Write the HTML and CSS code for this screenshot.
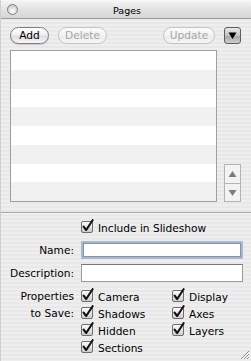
FILE: index.html
```html
<!DOCTYPE html>
<html>
<head>
<meta charset="utf-8">
<link rel="stylesheet" href="styles.css">
</head>
<body>
<svg class="defs" width="0" height="0">
  <defs>
    <linearGradient id="cbg" x1="0" y1="0" x2="0" y2="1">
      <stop offset="0" stop-color="#ffffff"/>
      <stop offset="0.5" stop-color="#e6e6e6"/>
      <stop offset="1" stop-color="#c9c9c9"/>
    </linearGradient>
    <symbol id="check" viewBox="0 0 14 14">
      <rect x="0.5" y="2.5" width="11" height="11" rx="1.5" fill="url(#cbg)" stroke="#6e6e6e"/>
      <path d="M2.6 7.6 L5.2 11 L11.6 1.2" fill="none" stroke="#111" stroke-width="2.1" stroke-linecap="round" stroke-linejoin="round"/>
    </symbol>
  </defs>
</svg>
<div class="window">
  <div class="titlebar">
    <span class="close"></span>
    <span class="title">Pages</span>
  </div>
  <div class="top">
    <div class="toolbar">
      <button class="btn btn-add">Add</button>
      <button class="btn btn-delete disabled">Delete</button>
      <span class="spacer"></span>
      <button class="btn btn-update disabled">Update</button>
      <span class="menu">
        <svg width="15" height="15" viewBox="0 0 15 15"><path d="M3.5 4.5 H11.5 L7.5 11 Z" fill="#000"/></svg>
      </span>
    </div>
    <div class="listarea">
      <div class="list">
        <div class="row"></div>
        <div class="row alt"></div>
        <div class="row"></div>
        <div class="row alt"></div>
        <div class="row"></div>
        <div class="row alt"></div>
        <div class="row"></div>
        <div class="row alt"></div>
      </div>
      <div class="scroll">
        <div class="arrow up"><svg width="15" height="18" viewBox="0 0 15 18"><path d="M3.5 12 H11.5 L7.5 6 Z" fill="#7d7d7d"/></svg></div>
        <div class="arrow down"><svg width="15" height="18" viewBox="0 0 15 18"><path d="M3.5 6 H11.5 L7.5 12 Z" fill="#7d7d7d"/></svg></div>
      </div>
    </div>
  </div>
  <div class="sep"></div>
  <div class="form">
    <div class="frow include">
      <span class="label"></span>
      <label class="cb"><svg class="box"><use href="#check"/></svg>Include in Slideshow</label>
    </div>
    <div class="frow name">
      <span class="label">Name:</span>
      <span class="field focus"></span>
    </div>
    <div class="frow desc">
      <span class="label">Description:</span>
      <span class="field"></span>
    </div>
    <div class="frow props">
      <span class="label">Properties<br>to Save:</span>
      <div class="checks">
        <label class="cb"><svg class="box"><use href="#check"/></svg>Camera</label>
        <label class="cb"><svg class="box"><use href="#check"/></svg>Shadows</label>
        <label class="cb"><svg class="box"><use href="#check"/></svg>Hidden</label>
        <label class="cb"><svg class="box"><use href="#check"/></svg>Sections</label>
        <label class="cb"><svg class="box"><use href="#check"/></svg>Display</label>
        <label class="cb"><svg class="box"><use href="#check"/></svg>Axes</label>
        <label class="cb"><svg class="box"><use href="#check"/></svg>Layers</label>
      </div>
    </div>
  </div>
  <svg class="grip" width="11" height="11" viewBox="0 0 11 11">
    <path d="M10 2 L2 10 M10 5 L5 10 M10 8 L8 10" stroke="#8a8a8a" stroke-width="1"/>
    <path d="M10.5 3 L3 10.5 M10.5 6 L6 10.5 M10.5 9 L9 10.5" stroke="#ffffff" stroke-width="1"/>
  </svg>
</div>
</body>
</html>
```

FILE: styles.css
```css
* { box-sizing: border-box; }
html, body { margin: 0; padding: 0; }
body {
  font-family: "DejaVu Sans", "Liberation Sans", sans-serif;
  font-size: 10.6px;
  color: #000;
  background: #ececec;
}
.defs { position: absolute; width: 0; height: 0; }
.window {
  position: relative;
  width: 251px;
  height: 361px;
  display: flex;
  flex-direction: column;
  background: repeating-linear-gradient(#eeeeee 0 2px, #e8e8e8 2px 4px);
  border-left: 1px solid #cfcfcf;
}
.titlebar {
  height: 19px;
  flex: none;
  display: flex;
  align-items: center;
  justify-content: center;
  position: relative;
  background: linear-gradient(#f4f4f4, #e2e2e2 50%, #d6d6d6);
  border-top: 1px solid #f8f8f8;
  border-bottom: 1px solid #9c9c9c;
}
.close {
  position: absolute;
  left: 6px;
  top: 3px;
  width: 11px;
  height: 11px;
  border-radius: 50%;
  border: 1px solid #7e7e7e;
  background: radial-gradient(circle at 50% 70%, #ffffff, #d8d8d8 60%, #b4b4b4);
}
.title {
  font-size: 9.5px;
  margin-left: 2px;
  margin-top: 1px;
}
.top {
  padding: 8px 10px 0 9px;
}
.toolbar {
  display: flex;
  align-items: center;
  height: 17px;
}
.spacer { flex: 1; }
.btn {
  font-family: inherit;
  font-size: 10.6px;
  height: 17px;
  padding: 0;
  border-radius: 9px;
  border: 1px solid #7d7d7d;
  background: linear-gradient(#ffffff, #f0f0f0 45%, #dedede 55%, #f6f6f6);
  color: #000;
  line-height: 15px;
  box-shadow: 0 1px 1px rgba(0,0,0,0.15);
}
.btn.disabled {
  color: #a6a6a6;
  border-color: #c3c3c3;
  background: linear-gradient(#fbfbfb, #f2f2f2 50%, #ececec 55%, #f6f6f6);
  box-shadow: none;
}
.btn-add { width: 39px; }
.btn-delete { width: 49px; margin-left: 9px; }
.btn-update { width: 52px; }
.menu {
  width: 17px;
  height: 17px;
  margin-left: 9px;
  border-radius: 3px;
  border: 1px solid #5e5e5e;
  background: linear-gradient(#e8e8e8, #c4c4c4 50%, #a8a8a8 55%, #cfcfcf);
  display: flex;
  align-items: center;
  justify-content: center;
}
.menu svg { display: block; }
.listarea {
  margin-top: 6px;
  display: flex;
  align-items: flex-end;
  gap: 7px;
}
.list {
  width: 209px;
  height: 152px;
  border: 1px solid #9f9f9f;
  background: #fff;
  display: flex;
  flex-direction: column;
}
.row { flex: 1; background: #ffffff; }
.row.alt { background: #f1f1f1; }
.scroll {
  width: 17px;
  height: 38px;
  border: 1px solid #b3b3b3;
  background: #f3f3f3;
  display: flex;
  flex-direction: column;
}
.arrow {
  flex: 1;
  display: flex;
  align-items: center;
  justify-content: center;
}
.arrow.up { border-bottom: 1px solid #b3b3b3; }
.arrow svg { display: block; }
.sep {
  margin-top: 10px;
  height: 2px;
  border-top: 1px solid #a6a6a6;
  border-bottom: 1px solid #f8f8f8;
}
.form {
  padding: 5px 8px 0 0;
  display: flex;
  flex-direction: column;
}
.frow {
  display: flex;
  gap: 7px;
  align-items: center;
}
.label {
  width: 73px;
  flex: none;
  text-align: right;
}
.include { height: 17px; }
.name { margin-top: 5px; height: 18px; }
.desc { margin-top: 5px; height: 18px; }
.props { margin-top: 6px; align-items: flex-start; }
.props .label { line-height: 17px; }
.field {
  flex: 1;
  height: 18px;
  background: #fff;
  border: 1px solid #9a9a9a;
  border-top-color: #777;
}
.field.focus {
  border: 2px solid #a9b9cc;
  box-shadow: inset 0 0 0 1px #7f93ad;
}
.cb {
  display: flex;
  align-items: center;
  height: 17px;
  white-space: nowrap;
}
.cb .box {
  width: 14px;
  height: 14px;
  margin-right: 3px;
  margin-top: -3px;
  flex: none;
}
.checks {
  display: grid;
  grid-template-columns: 91px 70px;
  grid-template-rows: repeat(4, 17px);
  grid-auto-flow: column;
}
.grip {
  position: absolute;
  right: 1px;
  bottom: 1px;
}
```
